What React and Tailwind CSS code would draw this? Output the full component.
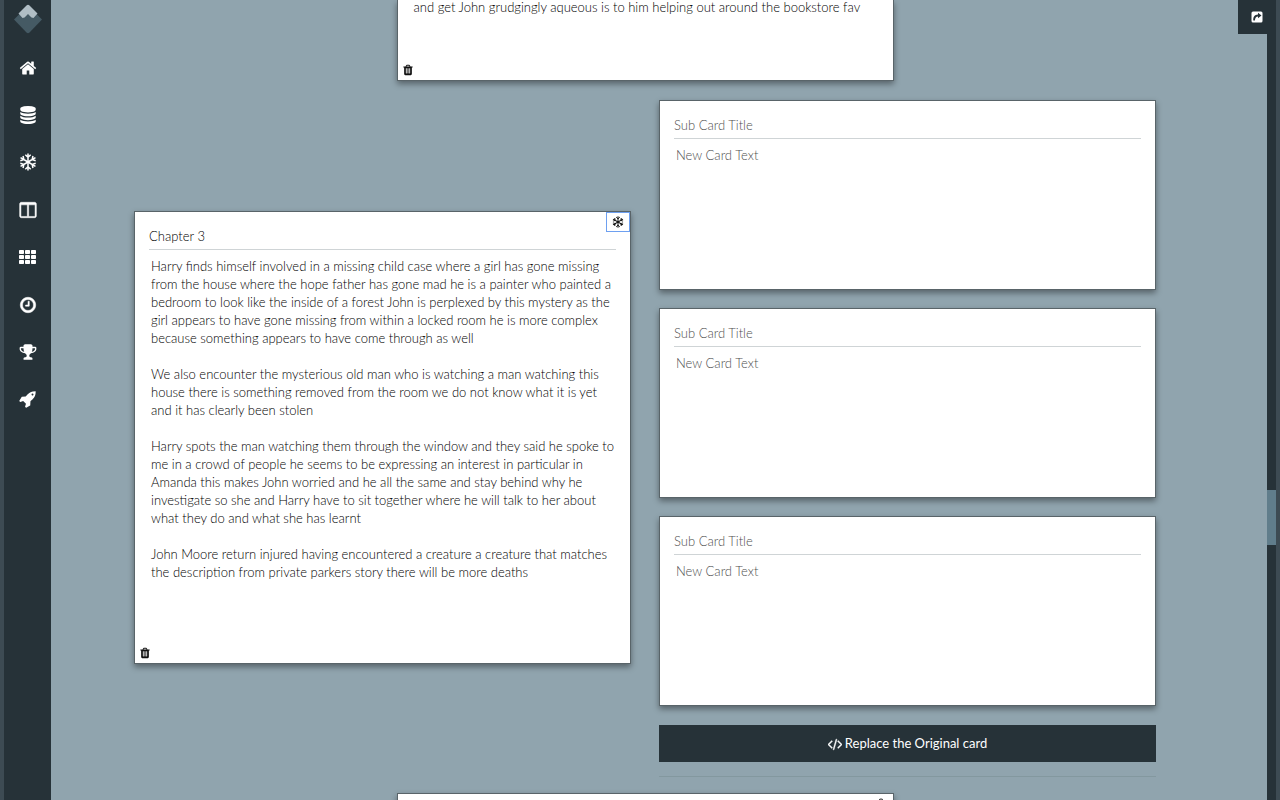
const paths = {
  home: "M1472 992v480q0 26-19 45t-45 19h-384v-384h-256v384h-384q-26 0-45-19t-19-45v-480q0-1 .5-3t.5-3l575-474 575 474q1 2 1 6zm223-69l-62 74q-8 9-21 11h-3q-13 0-21-7l-692-577-692 577q-12 8-24 7-13-2-21-11l-62-74q-8-10-7-23.5t11-21.5l719-599q32-26 76-26t76 26l244 204v-195q0-14 9-23t23-9h192q14 0 23 9t9 23v408l219 182q10 8 11 21.5t-7 23.5z",
  database:
    "M896 768q237 0 443-43t325-127v170q0 69-103 128t-280 93.5-385 34.5-385-34.5-280-93.5-103-128v-170q119 84 325 127t443 43zm0 768q237 0 443-43t325-127v170q0 69-103 128t-280 93.5-385 34.5-385-34.5-280-93.5-103-128v-170q119 84 325 127t443 43zm0-384q237 0 443-43t325-127v170q0 69-103 128t-280 93.5-385 34.5-385-34.5-280-93.5-103-128v-170q119 84 325 127t443 43zm0-1152q208 0 385 34.5t280 93.5 103 128v128q0 69-103 128t-280 93.5-385 34.5-385-34.5-280-93.5-103-128v-128q0-69 103-128t280-93.5 385-34.5z",
  columns:
    "M224 1536h608v-1152h-640v1120q0 13 9.500 22.500t22.500 9.500zm1376-32v-1120h-640v1152h608q13 0 22.500-9.500t9.500-22.500zm128-1216v1216q0 66-47 113t-113 47h-1344q-66 0-113-47t-47-113v-1216q0-66 47-113t113-47h1344q66 0 113 47t47 113z",
  clock:
    "M1024 544v448q0 14-9 23t-23 9h-320q-14 0-23-9t-9-23v-64q0-14 9-23t23-9h224v-352q0-14 9-23t23-9h64q14 0 23 9t9 23zm416 352q0-148-73-273t-198-198-273-73-273 73-198 198-73 273 73 273 198 198 273 73 273-73 198-198 73-273zm224 0q0 209-103 385.5t-279.500 279.500-385.500 103-385.500-103-279.500-279.500-103-385.500 103-385.500 279.500-279.500 385.500-103 385.500 103 279.500 279.500 103 385.500z",
  trophy:
    "M521 883q-73-160-73-371h-256v96q0 78 94.5 162t234.5 113zm1079-275v-96h-256q0 211-73 371 140-29 234.5-113t94.5-162zm128-128v128q0 71-41.5 143t-112 130-173 97.5-215.5 44.5q-42 54-95 95-38 34-52.5 72.5t-14.5 89.5q0 54 30.5 91t97.5 37q75 0 133.5 45.5t58.5 114.5v64q0 14-9 23t-23 9h-832q-14 0-23-9t-9-23v-64q0-69 58.5-114.5t133.5-45.5q67 0 97.5-37t30.5-91q0-51-14.5-89.5t-52.5-72.5q-53-41-95-95-113-5-215.5-44.5t-173-97.5-112-130-41.5-143v-128q0-40 28-68t68-28h288v-96q0-66 47-113t113-47h576q66 0 113 47t47 113v96h288q40 0 68 28t28 68z",
  rocket:
    "M1440 448q0-40-28-68t-68-28-68 28-28 68 28 68 68 28 68-28 28-68zm224-288q0 249-75.5 430.5t-253.5 360.5q-81 80-195 176l-20 379q-2 16-16 26l-384 224q-7 4-16 4-12 0-23-9l-64-64q-13-14-8-32l85-276-281-281-276 85q-3 1-9 1-14 0-23-9l-64-64q-17-19-5-39l224-384q10-14 26-16l379-20q96-114 176-195 188-187 358-258t431-71q14 0 24 9.5t10 22.5z",
  code: "M553 1399l-50 50q-10 10-23 10t-23-10l-466-466q-10-10-10-23t10-23l466-466q10-10 23-10t23 10l50 50q10 10 10 23t-10 23l-393 393 393 393q10 10 10 23t-10 23zm591-1067l-373 1291q-4 13-15.500 19.500t-23.500 2.500l-62-17q-13-4-19.500-15.500t-2.500-24.500l373-1291q4-13 15.500-19.500t23.500-2.500l62 17q13 4 19.500 15.500t2.500 24.500zm657 651l-466 466q-10 10-23 10t-23-10l-50-50q-10-10-10-23t10-23l393-393-393-393q-10-10-10-23t10-23l50-50q10-10 23-10t23 10l466 466q10 10 10 23t-10 23z",
  trash:
    "M704 1376v-704q0-14-9-23t-23-9h-64q-14 0-23 9t-9 23v704q0 14 9 23t23 9h64q14 0 23-9t9-23zm256 0v-704q0-14-9-23t-23-9h-64q-14 0-23 9t-9 23v704q0 14 9 23t23 9h64q14 0 23-9t9-23zm256 0v-704q0-14-9-23t-23-9h-64q-14 0-23 9t-9 23v704q0 14 9 23t23 9h64q14 0 23-9t9-23zm-544-992h448l-48-117q-7-9-17-11h-317q-10 2-17 11zm928 32v64q0 14-9 23t-23 9h-96v948q0 83-47 143.5t-113 60.5h-832q-66 0-113-58.5t-47-141.5v-952h-96q-14 0-23-9t-9-23v-64q0-14 9-23t23-9h309l70-167q15-37 54-63t79-26h320q40 0 79 26t54 63l70 167h309q14 0 23 9t9 23z",
};

function Icon({ name, className, stroke = 0 }) {
  return (
    <svg
      viewBox="0 0 1792 1792"
      fill="currentColor"
      stroke="currentColor"
      strokeWidth={stroke}
      aria-hidden="true"
      className={className}
    >
      <path d={paths[name]} />
    </svg>
  );
}

function Snowflake({ className }) {
  return (
    <svg viewBox="-9 -9 18 18" fill="none" stroke="currentColor" strokeWidth="1.500" aria-hidden="true" className={className}>
      {[0, 60, 120, 180, 240, 300].map((angle) => (
        <path key={angle} transform={`rotate(${angle})`} d="M0 0V-8.600M-2.700-7.300 0-4.800 2.700-7.300" />
      ))}
    </svg>
  );
}

function GridIcon() {
  return (
    <svg viewBox="0 0 18 18" fill="currentColor" aria-hidden="true" className="size-[18px]">
      {[2, 7, 12].map((y) =>
        [0, 6, 12].map((x) => <rect key={`${x}-${y}`} x={x} y={y} width="5" height="4" rx="0.8" />),
      )}
    </svg>
  );
}

function ShareIcon() {
  return (
    <svg viewBox="0 0 12 12" aria-hidden="true" className="size-3">
      <rect x="0.500" y="0.500" width="11" height="11" rx="1.500" fill="#fff" />
      <path d="M7 1.800 10.500 4.500 7 7.200V5.600C5 5.600 4.200 6.800 3.900 9.600H2.300C2 5.800 3.500 3.500 7 3.400Z" fill="#263238" />
    </svg>
  );
}

function Logo() {
  return (
    <svg viewBox="0 0 28 30" aria-hidden="true" className="h-[30px] w-7">
      <path d="M0 15.500 6 9.500 14 8 22 9.500 28 15.500 15.500 28.500Q14 30 12.500 28.500Z" fill="#455a64" />
      <path d="M12.500 1.500Q14 0 15.500 1.500L23.500 9.500 19.500 14 17.500 13.500 14 10 10.500 13.500 8.500 14 4.500 9.500Z" fill="#b0bec5" />
    </svg>
  );
}

const nav = [
  ["Home", <Icon name="home" className="size-[18px]" />],
  ["Database", <Icon name="database" className="size-[18px]" />],
  ["Snowflake", <Snowflake className="size-[18px]" />],
  ["Columns", <Icon name="columns" stroke={50} className="size-[18px]" />],
  ["Grid", <GridIcon />],
  ["History", <Icon name="clock" stroke={50} className="size-[18px]" />],
  ["Awards", <Icon name="trophy" className="size-[18px]" />],
  ["Launch", <Icon name="rocket" className="size-[18px]" />],
];

const chapter = `Harry finds himself involved in a missing child case where a girl has gone missing
from the house where the hope father has gone mad he is a painter who painted a
bedroom to look like the inside of a forest John is perplexed by this mystery as the
girl appears to have gone missing from within a locked room he is more complex
because something appears to have come through as well

We also encounter the mysterious old man who is watching a man watching this
house there is something removed from the room we do not know what it is yet
and it has clearly been stolen

Harry spots the man watching them through the window and they said he spoke to
me in a crowd of people he seems to be expressing an interest in particular in
Amanda this makes John worried and he all the same and stay behind why he
investigate so she and Harry have to sit together where he will talk to her about
what they do and what she has learnt

John Moore return injured having encountered a creature a creature that matches
the description from private parkers story there will be more deaths`;

const cardStyle = "border border-[#596469] bg-white shadow-[0_3px_6px_rgba(0,0,0,0.4)]";

function DeleteButton() {
  return (
    <button type="button" aria-label="Delete card" className="absolute bottom-1 left-1 text-[#111]">
      <Icon name="trash" className="size-3" />
    </button>
  );
}

function CardFields({ title, text }) {
  return (
    <>
      <input
        aria-label="Card title"
        defaultValue={title}
        placeholder="Sub Card Title"
        className="h-6 w-full border-b border-[#cfd4d6] pb-1 outline-none placeholder:text-[#505050]"
      />
      <textarea
        aria-label="Card text"
        defaultValue={text}
        placeholder="New Card Text"
        className="mt-[7px] -mr-2 flex-1 resize-none overflow-hidden pl-[2px] leading-[18px] whitespace-pre outline-none placeholder:text-[#505050]"
      />
    </>
  );
}

export default function App() {
  return (
    <div className="flex h-screen overflow-hidden bg-[#90a4ae] font-['Lato',sans-serif] text-[13px] font-light text-black">
      <nav className="flex w-[51px] shrink-0 flex-col items-center border-l-4 border-[#3d4b53] bg-[#263238] pt-1 text-white">
        <a href="#top" aria-label="Dashboard">
          <Logo />
        </a>
        <ul className="mt-[10px] flex h-[379px] flex-col justify-between">
          {nav.map(([label, icon]) => (
            <li key={label}>
              <a href={`#${label.toLowerCase()}`} aria-label={label} className="flex h-[47px] w-[47px] items-center justify-center">
                {icon}
              </a>
            </li>
          ))}
        </ul>
      </nav>

      <main className="flex min-w-0 flex-1 flex-col items-center overflow-hidden pr-7">
        <section className="relative flex h-[81px] w-[497px] shrink-0 flex-col border border-t-0 border-[#596469] bg-white px-4 shadow-[0_3px_6px_rgba(0,0,0,0.4)]">
          <p className="leading-[14px] whitespace-nowrap">
            and get John grudgingly aqueous is to him helping out around the bookstore fav
          </p>
          <DeleteButton />
        </section>

        <div className="mt-[19px] grid w-full max-w-[1022px] shrink-0 grid-cols-2 items-center gap-7">
          <section className={`relative mb-[2px] flex h-[453px] flex-col px-[14px] pt-[14px] pb-6 ${cardStyle}`}>
            <CardFields title="Chapter 3" text={chapter} />
            <DeleteButton />
            <button
              type="button"
              aria-label="Split card"
              className="absolute top-0 right-0 flex h-5 w-6 items-center justify-center border border-[#6ea0f0] bg-white text-[#111]"
            >
              <Snowflake className="size-3" />
            </button>
          </section>

          <div className="flex flex-col">
            <div className="flex flex-col gap-[18px]">
              {[1, 2, 3].map((n) => (
                <section key={n} className={`flex h-[190px] flex-col px-[14px] pt-[14px] pb-6 ${cardStyle}`}>
                  <CardFields />
                </section>
              ))}
            </div>
            <button
              type="button"
              className="mt-[19px] flex h-[37px] items-center justify-center gap-[3px] bg-[#263238] font-normal text-white"
            >
              <Icon name="code" stroke={60} className="size-[14px]" />
              Replace the Original card
            </button>
            <hr className="mt-[14px] border-[#83989f]" />
          </div>
        </div>

        <section className={`relative mt-4 h-[454px] w-[497px] shrink-0 ${cardStyle}`}>
          <button type="button" aria-label="Split card" className="absolute top-0 right-0 flex h-5 w-6 items-center justify-center text-[#111]">
            <Snowflake className="size-3" />
          </button>
        </section>
      </main>

      <aside className="relative flex w-[13px] shrink-0 flex-col border-r-4 border-[#3d4b53] bg-[#263238] pt-[490px]">
        <div className="h-[55px] bg-[#607d8b]" />
        <button type="button" aria-label="Share" className="absolute top-0 right-0 flex h-[34px] w-[38px] items-center justify-center bg-[#263238]">
          <ShareIcon />
        </button>
      </aside>
    </div>
  );
}
